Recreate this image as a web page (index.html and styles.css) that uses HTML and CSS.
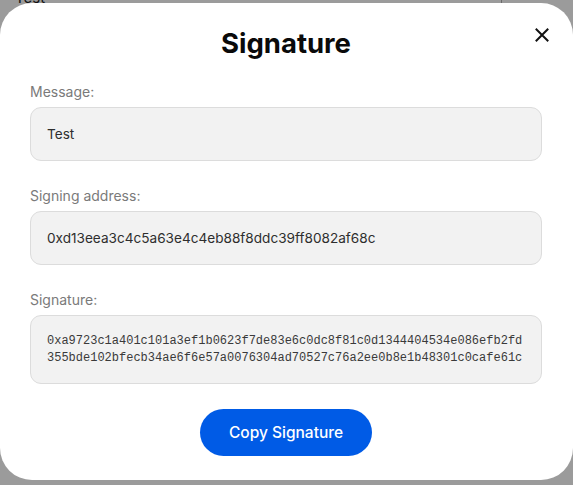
FILE: index.html
```html
<!DOCTYPE html>
<html>
<head>
<meta charset="utf-8">
<link rel="stylesheet" href="styles.css">
</head>
<body>
<div class="backdrop"><span class="bg-text">Test</span><span class="bg-line"></span></div>
<div class="modal">
  <div class="header">
    <h1 class="title">Signature</h1>
    <button class="close" aria-label="Close">
      <svg width="14" height="14" viewBox="0 0 14 14"><path d="M1.5 1.5L12.5 12.5M12.5 1.5L1.5 12.5" stroke="#111" stroke-width="2" stroke-linecap="square"/></svg>
    </button>
  </div>
  <div class="field">
    <div class="label">Message:</div>
    <div class="box">Test</div>
  </div>
  <div class="field">
    <div class="label">Signing address:</div>
    <div class="box">0xd13eea3c4c5a63e4c4eb88f8ddc39ff8082af68c</div>
  </div>
  <div class="field">
    <div class="label">Signature:</div>
    <div class="box mono">0xa9723c1a401c101a3ef1b0623f7de83e6c0dc8f81c0d1344404534e086efb2fd355bde102bfecb34ae6f6e57a0076304ad70527c76a2ee0b8e1b48301c0cafe61c</div>
  </div>
  <div class="actions">
    <button class="copy">Copy Signature</button>
  </div>
</div>
</body>
</html>
```
FILE: styles.css
```css
html, body {
  margin: 0;
  padding: 0;
}
body {
  background: #9b9b9b;
  width: 573px;
  height: 485px;
  overflow: hidden;
  position: relative;
  font-family: Inter, "Noto Sans", sans-serif;
  padding-top: 3px;
  box-sizing: border-box;
}
.backdrop {
  position: absolute;
  left: 0;
  top: 0;
  width: 573px;
  height: 3px;
}
.bg-text {
  position: absolute;
  left: 15px;
  top: -12px;
  font-size: 15px;
  color: #111;
}
.bg-line {
  position: absolute;
  left: 501px;
  top: 0;
  width: 1px;
  height: 3px;
  background: #6a6a6a;
}
.modal {
  position: relative;
  width: 573px;
  height: 477px;
  background: #fff;
  border-radius: 32px;
  box-sizing: border-box;
  padding: 0 31px 0 30px;
}
.header {
  position: relative;
  height: 79px;
  display: flex;
  justify-content: center;
  align-items: flex-start;
}
.title {
  margin: 22px 0 0;
  font-size: 27.5px;
  font-weight: 700;
  color: #0a0a0a;
  line-height: 36px;
}
.close {
  position: absolute;
  right: -7px;
  top: 25px;
  width: 14px;
  height: 14px;
  padding: 0;
  border: 0;
  background: none;
  display: flex;
}
.field {
  margin-bottom: 25px;
}
.label {
  font-size: 14px;
  color: #7a7a7a;
  line-height: 20px;
  margin-bottom: 5px;
}
.box {
  background: #f2f2f2;
  border: 1px solid #dcdcdc;
  border-radius: 11px;
  padding: 16px;
  font-size: 13.6px;
  line-height: 20px;
  color: #2e2e2e;
}
.mono {
  font-family: "Liberation Mono", "DejaVu Sans Mono", monospace;
  font-size: 12px;
  line-height: 17px;
  color: #3a3a3a;
  word-break: break-all;
  padding: 17px 16px 16px;
}
.actions {
  display: flex;
  justify-content: center;
  margin-top: 3px;
}
.copy {
  width: 172px;
  height: 47px;
  border: 0;
  border-radius: 24px;
  background: #005be6;
  color: #fff;
  font-family: Inter, "Noto Sans", sans-serif;
  font-size: 15.5px;
  font-weight: 500;
}
```
